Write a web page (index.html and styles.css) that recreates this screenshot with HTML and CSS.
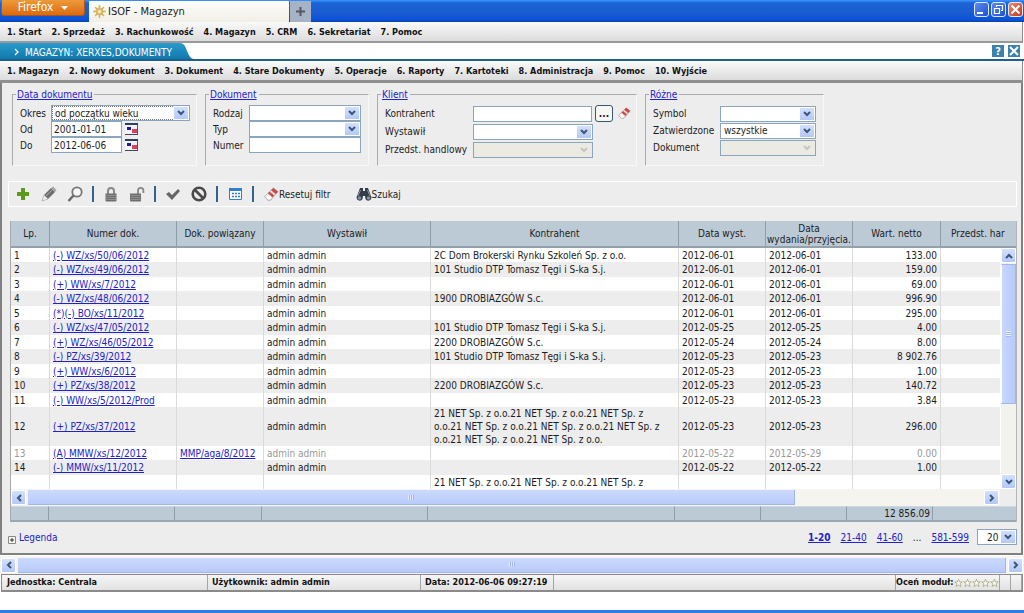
FILE: index.html
```html
<!DOCTYPE html>
<html lang="pl">
<head>
<meta charset="utf-8">
<meta name="viewport" content="width=device-width, initial-scale=1">
<title>ISOF - Magazyn</title>
<link rel="stylesheet" href="styles.css">
</head>
<body>
<svg class="defs" aria-hidden="true">
  <symbol id="down" viewBox="0 0 8 6"><path d="M1 1l3 3 3-3" fill="none" stroke="currentColor" stroke-width="2"/></symbol>
  <symbol id="up" viewBox="0 0 8 6"><path d="M1 5l3-3 3 3" fill="none" stroke="currentColor" stroke-width="2"/></symbol>
  <symbol id="left" viewBox="0 0 6 8"><path d="M5 1L2 4l3 3" fill="none" stroke="currentColor" stroke-width="2"/></symbol>
  <symbol id="right" viewBox="0 0 6 8"><path d="M1 1l3 3-3 3" fill="none" stroke="currentColor" stroke-width="2"/></symbol>
  <symbol id="chevron" viewBox="0 0 6 8"><path d="M1 1l3 3-3 3" fill="none" stroke="currentColor" stroke-width="1.300"/></symbol>
  <symbol id="calendar" viewBox="0 0 13 12"><path d="M0 0h13v12H0z" fill="#f3f3fa"/><path d="M0 0h13v2H0z" fill="#333a66"/><path d="M0 11h13v1H0z" fill="#445"/><path d="M12 2h1v9h-1z" fill="#556"/><path d="M2 4h4v3H2z" fill="#1c1c9c"/><path d="M7 6h5v4H7z" fill="#d9425a"/></symbol>
  <symbol id="eraser" viewBox="0 0 16 16"><path d="M1 10L10 1l5 4-8 9H4z" fill="#fbfbfb" stroke="#999" stroke-width=".8"/><path d="M4 7l6-6 5 4-6 6z" fill="#c94a42"/><path d="M6 5l5 4 1.500-1.500-5-4z" fill="#f5dcd9"/><path d="M1 10l3-3 5 4-2 3H4z" fill="#fff" stroke="#a5a5a5" stroke-width=".8"/></symbol>
  <symbol id="lock" viewBox="0 0 14 16"><path d="M4 8V5a3 3 0 016 0v3" fill="none" stroke="#888" stroke-width="2"/><path d="M1.500 7.500h11v7a1 1 0 01-1 1h-9a1 1 0 01-1-1z" fill="#6f6f6f"/><path d="M2 9.500h10M2 11.500h10M2 13.500h10" stroke="#8f8f8f"/></symbol>
  <symbol id="star" viewBox="0 0 10 10"><path d="M5 .8l1.200 3h3L6.800 5.700l.9 3.300L5 7.200 2.300 9l.9-3.300L.8 3.800h3z" fill="#fbfbf4" stroke="#aaa684" stroke-width=".9"/></symbol>
</svg>

<header class="titlebar">
  <button class="firefox" type="button">Firefox <svg width="7" height="4" viewBox="0 0 7 4"><path d="M0 0h7L3.500 4z" fill="#fff"/></svg></button>
  <div class="tab"><svg width="13" height="13" viewBox="0 0 13 13"><g stroke="#d9b15c" stroke-width="1.500"><path d="M6.500 0v13M0 6.500h13M2 2l9 9M11 2l-9 9"/></g><circle cx="6.500" cy="6.500" r="3.600" fill="none" stroke="#d9b15c"/><circle cx="6.500" cy="6.500" r="1.500" fill="#fff3cf"/></svg><span>ISOF - Magazyn</span></div>
  <button class="newtab" type="button" aria-label="Nowa karta"><svg width="9" height="9" viewBox="0 0 9 9"><path d="M3.500 0h2v3.500H9v2H5.500V9h-2V5.500H0v-2h3.500z" fill="#505a66"/></svg></button>
  <div class="winbtns">
    <button type="button" aria-label="Minimalizuj"><svg width="11" height="11" viewBox="0 0 11 11"><path d="M1 8h6v2H1z" fill="#fff"/></svg></button>
    <button type="button" aria-label="Przywróć"><svg width="11" height="11" viewBox="0 0 11 11"><path d="M3.500 3V1.500h6v5H8M1.500 4.500h5v5h-5z" fill="none" stroke="#fff" stroke-width="1.200"/></svg></button>
    <button class="close" type="button" aria-label="Zamknij"><svg width="11" height="11" viewBox="0 0 11 11"><path d="M1.500 1.500l8 8M9.500 1.500l-8 8" stroke="#fff" stroke-width="2"/></svg></button>
  </div>
</header>

<nav class="menu" aria-label="Główne">
  <a href="#">1. Start</a><a href="#">2. Sprzedaż</a><a href="#">3. Rachunkowość</a><a href="#">4. Magazyn</a><a href="#">5. CRM</a><a href="#">6. Sekretariat</a><a href="#">7. Pomoc</a>
</nav>

<div class="crumb">
  <div class="crumb-tab"><svg width="6" height="8"><use href="#chevron"/></svg><span>MAGAZYN: XERXES,DOKUMENTY</span></div>
  <svg class="crumb-edge" width="14" height="16" viewBox="0 0 14 16"><defs><linearGradient id="edge" x2="0" y2="1"><stop stop-color="#2a9bcd"/><stop offset="1" stop-color="#0f78ad"/></linearGradient></defs><path d="M0 0c8 0 6 15 14 16H0z" fill="url(#edge)"/></svg>
  <div class="crumb-tools">
    <button type="button">?</button>
    <button type="button" aria-label="Zamknij moduł"><svg width="10" height="10" viewBox="0 0 10 10"><path d="M1 1l8 8M9 1L1 9" stroke="#fff" stroke-width="2"/></svg></button>
  </div>
</div>

<nav class="menu menu-sub" aria-label="Magazyn">
  <a href="#">1. Magazyn</a><a href="#">2. Nowy dokument</a><a href="#">3. Dokument</a><a href="#">4. Stare Dokumenty</a><a href="#">5. Operacje</a><a href="#">6. Raporty</a><a href="#">7. Kartoteki</a><a href="#">8. Administracja</a><a href="#">9. Pomoc</a><a href="#">10. Wyjście</a>
</nav>

<main class="panel">
  <form class="filters">
    <fieldset class="f-date">
      <legend><a href="#">Data dokumentu</a></legend>
      <div class="fields">
        <label for="okres">Okres</label><span class="combo dotted"><select id="okres"><option>od początku wieku</option></select><svg><use href="#down"/></svg></span>
        <label for="od">Od</label><span class="with-icon"><input id="od" value="2001-01-01"><svg width="13" height="12"><use href="#calendar"/></svg></span>
        <label for="do">Do</label><span class="with-icon"><input id="do" value="2012-06-06"><svg width="13" height="12"><use href="#calendar"/></svg></span>
      </div>
    </fieldset>
    <fieldset class="f-doc">
      <legend><a href="#">Dokument</a></legend>
      <div class="fields">
        <label for="rodzaj">Rodzaj</label><span class="combo"><select id="rodzaj"><option></option></select><svg><use href="#down"/></svg></span>
        <label for="typ">Typ</label><span class="combo"><select id="typ"><option></option></select><svg><use href="#down"/></svg></span>
        <label for="numer">Numer</label><input id="numer">
      </div>
    </fieldset>
    <fieldset class="f-client">
      <legend><a href="#">Klient</a></legend>
      <div class="fields">
        <label for="kontrahent">Kontrahent</label><span class="with-icon"><input id="kontrahent"><button class="dots" type="button">...</button><svg width="13" height="13"><use href="#eraser"/></svg></span>
        <label for="wystawil">Wystawił</label><span class="combo"><select id="wystawil"><option></option></select><svg><use href="#down"/></svg></span>
        <label for="przedst">Przedst. handlowy</label><span class="combo off"><select id="przedst" disabled><option></option></select><svg><use href="#down"/></svg></span>
      </div>
    </fieldset>
    <fieldset class="f-misc">
      <legend><a href="#">Różne</a></legend>
      <div class="fields">
        <label for="symbol">Symbol</label><span class="combo"><select id="symbol"><option></option></select><svg><use href="#down"/></svg></span>
        <label for="zatw">Zatwierdzone</label><span class="combo"><select id="zatw"><option>wszystkie</option></select><svg><use href="#down"/></svg></span>
        <label for="dokument">Dokument</label><span class="combo off"><select id="dokument" disabled><option></option></select><svg><use href="#down"/></svg></span>
      </div>
    </fieldset>
  </form>

  <div class="toolbar">
    <button type="button" aria-label="Dodaj"><svg width="14" height="14" viewBox="0 0 14 14"><path d="M5 1h4v4h4v4H9v4H5V9H1V5h4z" fill="#5a9a1f"/></svg></button>
    <button type="button" aria-label="Edytuj"><svg width="16" height="16" viewBox="0 0 16 16"><path d="M3 9l7-7 4 4-7 7z" fill="#6f6f6f"/><path d="M10 2l2-1.500L15.500 4 14 6z" fill="#a5a5a5"/><path d="M3 9l4 4-6 2z" fill="#eee" stroke="#999" stroke-width=".6"/><path d="M5 10l6-6" stroke="#a9a9a9"/></svg></button>
    <button type="button" aria-label="Podgląd"><svg width="16" height="16" viewBox="0 0 16 16"><circle cx="10" cy="6" r="4.700" fill="#f6f6f6" stroke="#777" stroke-width="1.800"/><path d="M6.500 9.500L1.500 15" stroke="#6a6a6a" stroke-width="2.500"/></svg></button>
    <i class="sep"></i>
    <button type="button" aria-label="Zablokuj"><svg width="14" height="16"><use href="#lock"/></svg></button>
    <button type="button" aria-label="Odblokuj"><svg width="16" height="16" viewBox="0 0 16 16"><path d="M9 8V4.500a2.700 2.700 0 015.400 0V7" fill="none" stroke="#888" stroke-width="1.800"/><path d="M1 7.500h11v7a1 1 0 01-1 1H2a1 1 0 01-1-1z" fill="#6f6f6f"/><path d="M1.500 9.500h10M1.500 11.500h10M1.500 13.500h10" stroke="#8f8f8f"/></svg></button>
    <i class="sep"></i>
    <button type="button" aria-label="Zatwierdź"><svg width="16" height="14" viewBox="0 0 16 14"><path d="M1 7l3-2 3 3 6-6 2 2-8 9z" fill="#666"/></svg></button>
    <button type="button" aria-label="Anuluj"><svg width="16" height="16" viewBox="0 0 16 16"><circle cx="8" cy="8" r="6.300" fill="none" stroke="#4a4a4a" stroke-width="2.600"/><path d="M4 4l8 8" stroke="#4a4a4a" stroke-width="2.600"/></svg></button>
    <i class="sep"></i>
    <button type="button" aria-label="Kolumny"><svg width="13" height="12" viewBox="0 0 13 12"><path d="M.5 .5h12v11H.5z" fill="#fff" stroke="#2f7fd0"/><path d="M0 0h13v3H0z" fill="#2f7fd0"/><path d="M3 5.500h2m1 0h2m1 0h2M3 8.500h2m1 0h2m1 0h2" stroke="#2f7fd0" stroke-width="1.500"/></svg></button>
    <i class="sep"></i>
    <button class="text" type="button"><svg width="15" height="15"><use href="#eraser"/></svg>Resetuj filtr</button>
    <button class="text find" type="button"><svg width="16" height="15" viewBox="0 0 16 15"><path d="M4 1h3v3h2V1h3l3.500 9.500a3.200 3.200 0 01-6 1.500L9 9H7l-.5 3a3.200 3.200 0 01-6-1.500z" fill="#343e49"/><path d="M4.500 3L2 9M11.500 3L14 9" stroke="#8a97a5"/><circle cx="3.500" cy="11" r="1.800" fill="#7e93ab"/><circle cx="12.500" cy="11" r="1.800" fill="#7e93ab"/></svg>Szukaj</button>
  </div>

  <section class="grid">
    <table class="cols head">
      <colgroup><col class="c-lp"><col class="c-num"><col class="c-rel"><col class="c-by"><col><col class="c-d"><col class="c-d"><col class="c-net"><col class="c-last"></colgroup>
      <thead><tr><th>Lp.</th><th>Numer dok.</th><th>Dok. powiązany</th><th>Wystawił</th><th>Kontrahent</th><th>Data wyst.</th><th>Data wydania/przyjęcia.</th><th>Wart. netto</th><th class="cut">Przedst. har</th></tr></thead>
    </table>
    <div class="body">
      <table class="cols rows">
        <colgroup><col class="c-lp"><col class="c-num"><col class="c-rel"><col class="c-by"><col><col class="c-d"><col class="c-d"><col class="c-net"><col class="c-end"></colgroup>
        <tbody>
          <tr><td>1</td><td><a href="#">(-) WZ/xs/50/06/2012</a></td><td></td><td>admin admin</td><td>2C Dom Brokerski Rynku Szkoleń Sp. z o.o.</td><td>2012-06-01</td><td>2012-06-01</td><td>133.00</td><td></td></tr>
          <tr><td>2</td><td><a href="#">(-) WZ/xs/49/06/2012</a></td><td></td><td>admin admin</td><td>101 Studio DTP Tomasz Tęgi i S-ka S.j.</td><td>2012-06-01</td><td>2012-06-01</td><td>159.00</td><td></td></tr>
          <tr><td>3</td><td><a href="#">(+) WW/xs/7/2012</a></td><td></td><td>admin admin</td><td></td><td>2012-06-01</td><td>2012-06-01</td><td>69.00</td><td></td></tr>
          <tr><td>4</td><td><a href="#">(-) WZ/xs/48/06/2012</a></td><td></td><td>admin admin</td><td>1900 DROBIAZGÓW S.c.</td><td>2012-06-01</td><td>2012-06-01</td><td>996.90</td><td></td></tr>
          <tr><td>5</td><td><a href="#">(*)(-) BO/xs/11/2012</a></td><td></td><td>admin admin</td><td></td><td>2012-06-01</td><td>2012-06-01</td><td>295.00</td><td></td></tr>
          <tr><td>6</td><td><a href="#">(-) WZ/xs/47/05/2012</a></td><td></td><td>admin admin</td><td>101 Studio DTP Tomasz Tęgi i S-ka S.j.</td><td>2012-05-25</td><td>2012-05-25</td><td>4.00</td><td></td></tr>
          <tr><td>7</td><td><a href="#">(+) WZ/xs/46/05/2012</a></td><td></td><td>admin admin</td><td>2200 DROBIAZGÓW S.c.</td><td>2012-05-24</td><td>2012-05-24</td><td>8.00</td><td></td></tr>
          <tr><td>8</td><td><a href="#">(-) PZ/xs/39/2012</a></td><td></td><td>admin admin</td><td>101 Studio DTP Tomasz Tęgi i S-ka S.j.</td><td>2012-05-23</td><td>2012-05-23</td><td>8 902.76</td><td></td></tr>
          <tr><td>9</td><td><a href="#">(+) WW/xs/6/2012</a></td><td></td><td>admin admin</td><td></td><td>2012-05-23</td><td>2012-05-23</td><td>1.00</td><td></td></tr>
          <tr><td>10</td><td><a href="#">(+) PZ/xs/38/2012</a></td><td></td><td>admin admin</td><td>2200 DROBIAZGÓW S.c.</td><td>2012-05-23</td><td>2012-05-23</td><td>140.72</td><td></td></tr>
          <tr><td>11</td><td><a href="#">(-) WW/xs/5/2012/Prod</a></td><td></td><td>admin admin</td><td></td><td>2012-05-23</td><td>2012-05-23</td><td>3.84</td><td></td></tr>
          <tr><td>12</td><td><a href="#">(+) PZ/xs/37/2012</a></td><td></td><td>admin admin</td><td>21 NET Sp. z o.o.21 NET Sp. z o.o.21 NET Sp. z o.o.21 NET Sp. z o.o.21 NET Sp. z o.o.21 NET Sp. z o.o.21 NET Sp. z o.o.21 NET Sp. z o.o.</td><td>2012-05-23</td><td>2012-05-23</td><td>296.00</td><td></td></tr>
          <tr class="void"><td>13</td><td><a href="#">(A) MMW/xs/12/2012</a></td><td><a href="#">MMP/aga/8/2012</a></td><td>admin admin</td><td></td><td>2012-05-22</td><td>2012-05-29</td><td>0.00</td><td></td></tr>
          <tr><td>14</td><td><a href="#">(-) MMW/xs/11/2012</a></td><td></td><td>admin admin</td><td></td><td>2012-05-22</td><td>2012-05-22</td><td>1.00</td><td></td></tr>
          <tr><td></td><td></td><td></td><td></td><td>21 NET Sp. z o.o.21 NET Sp. z o.o.21 NET Sp. z</td><td></td><td></td><td></td><td></td></tr>
        </tbody>
      </table>
      <div class="vbar"><button type="button" aria-label="W górę"><svg width="8" height="6"><use href="#up"/></svg></button><div class="vthumb"></div><div class="vrest"></div><button type="button" aria-label="W dół"><svg width="8" height="6"><use href="#down"/></svg></button></div>
    </div>
    <div class="hbar inner"><button type="button" aria-label="W lewo"><svg width="6" height="8"><use href="#left"/></svg></button><div class="hthumb"></div><div class="hrest"></div><button type="button" aria-label="W prawo"><svg width="6" height="8"><use href="#right"/></svg></button></div>
    <table class="cols foot">
      <colgroup><col class="t-lp"><col class="t-num"><col class="t-rel"><col class="t-by"><col><col class="t-d"><col class="t-d"><col class="t-d"><col class="t-last"></colgroup>
      <tbody><tr><td></td><td></td><td></td><td></td><td></td><td></td><td></td><td>12 856.09</td><td></td></tr></tbody>
    </table>
  </section>

  <div class="under">
    <a class="legend" href="#"><svg width="8" height="8" viewBox="0 0 8 8"><path d="M.5 .5h7v7h-7z" fill="#f6f6f0" stroke="#888"/><path d="M2 4h4M4 2v4" stroke="#333"/></svg>Legenda</a>
    <nav class="pages" aria-label="Strony"><a class="on" href="#">1-20</a><a href="#">21-40</a><a href="#">41-60</a><span>...</span><a href="#">581-599</a></nav>
    <span class="combo size"><select aria-label="Liczba wierszy"><option>20</option></select><svg><use href="#down"/></svg></span>
  </div>
</main>

<div class="hbar outer"><button type="button" aria-label="W lewo"><svg width="6" height="8"><use href="#left"/></svg></button><div class="hthumb"></div><button type="button" aria-label="W prawo"><svg width="6" height="8"><use href="#right"/></svg></button></div>

<footer class="status">
  <span class="s-unit">Jednostka: Centrala</span><span class="s-user">Użytkownik: admin admin</span><span class="s-date">Data: 2012-06-06 09:27:19</span><span class="s-gap"></span>
  <span class="s-rate">Oceń moduł:<svg width="9" height="10"><use href="#star"/></svg><svg width="9" height="10"><use href="#star"/></svg><svg width="9" height="10"><use href="#star"/></svg><svg width="9" height="10"><use href="#star"/></svg><svg width="9" height="10"><use href="#star"/></svg></span><span class="s-box"></span><span class="s-box"></span>
</footer>
<div class="taskbar"></div>
</body>
</html>
```

FILE: styles.css
```css
* { box-sizing: border-box; }

body {
  margin: 0;
  min-height: 100vh;
  display: flex;
  flex-direction: column;
  background: #fff;
  color: #1c1c1c;
  font: 10px/13px "DejaVu Sans Condensed", "DejaVu Sans", sans-serif;
}
button, input, select { font: inherit; color: inherit; margin: 0; padding: 0; border: 0; background: none; border-radius: 0; }
button { display: flex; align-items: center; justify-content: center; }
a { color: #2222cc; }
svg { flex: none; display: block; }
.defs { position: absolute; width: 0; height: 0; }

/* browser window */
.titlebar {
  height: 22px;
  display: flex;
  background: linear-gradient(#3d96ff, #1a63d6 3px, #1b5cd0 12px, #0a52dc 20px, #0a3f9c);
}
.firefox {
  width: 84px;
  height: 16px;
  margin-left: 1px;
  gap: 8px;
  color: #fff;
  font-size: 12px;
  background: linear-gradient(#ec9a3a, #dc6a10);
  border: 1px solid #a8581c;
  border-top: 0;
  border-radius: 0 0 3px 3px;
}
.tab {
  width: 200px;
  margin: 1px 0 0 4px;
  padding-left: 4px;
  display: flex;
  align-items: center;
  gap: 2px;
  background: linear-gradient(#fdfdfb, #f1efe6);
  font-size: 11px;
}
.newtab { width: 21px; margin: 1px 0 0 1px; background: #a5b3c4; }
.winbtns { display: flex; gap: 2px; margin: 2px 1px 0 auto; }
.winbtns button { width: 15px; height: 15px; border: 1px solid #dfe9fb; border-radius: 3px; background: linear-gradient(135deg, #5b8cf0, #1f4fcf); }
.winbtns .close { background: linear-gradient(135deg, #ee8a68, #c8341a); }

.menu {
  height: 21px;
  display: flex;
  align-items: center;
  gap: 10px;
  padding: 2px 7px 0;
  margin-right: 1px;
  background: linear-gradient(#fafafa, #dcdcdc);
  border-bottom: 2px solid #9a9a9a;
  border-right: 1px solid #8c8c8c;
}
.menu a { color: #111; text-decoration: none; font-weight: bold; font-size: 9px; white-space: nowrap; }
.menu-sub { border-bottom: 3px solid #8f8f8f; height: 22px; }

.crumb { height: 18px; display: flex; align-items: flex-end; border-bottom: 2px solid #22608c; }
.crumb-tab {
  height: 16px;
  width: 180px;
  padding: 2px 0 0 14px;
  display: flex;
  align-items: center;
  gap: 5px;
  white-space: nowrap;
  color: #fff;
  background: linear-gradient(#2a9bcd, #0f78ad);
}
.crumb-tools { margin: 0 4px 2px auto; display: flex; gap: 4px; }
.crumb-tools button { width: 12px; height: 12px; background: #3c82a9; color: #fff; font-size: 11px; font-weight: bold; }

/* filters */
.panel {
  margin-right: 1px;
  background: #ededed;
  border: solid #808080;
  border-width: 0 2px 2px 2px;
  padding: 5px 4px 8px 6px;
}
.filters { display: flex; gap: 8px; padding-left: 4px; }
fieldset {
  margin: 0;
  min-width: 0;
  height: 78px;
  padding: 4px 7px 0;
  border: 1px solid #f8f8f8;
  border-top-color: #ababab;
  border-left-color: #ababab;
}
legend { padding: 0 2px 0 1px; margin-left: -4px; }
.f-date { width: 185px; }
.f-doc { width: 164px; }
.f-client { width: 260px; }
.f-misc { width: 179px; }
.fields { display: grid; align-items: center; grid-auto-rows: 16px; }
.f-date .fields { grid-template-columns: 31px 139px; }
.f-doc .fields { grid-template-columns: 36px 112px; }
.f-client .fields { grid-template-columns: 88px 120px; grid-auto-rows: 17px; row-gap: 1px; }
.f-misc .fields { grid-template-columns: 67px 96px; grid-auto-rows: 17px; }
label { white-space: nowrap; }
input {
  width: 100%;
  height: 16px;
  padding: 0 2px;
  background: #fff;
  border: 1px solid #8aa6bd;
}
.with-icon { display: flex; align-items: center; gap: 3px; }
.with-icon input { flex: none; width: 71px; }
.f-client .with-icon input { width: 119px; }
.f-client .with-icon svg { margin-left: 2px; }
.dots { flex: none; width: 18px; height: 17px; border: 1px solid #39566f; border-radius: 3px; background: #f6f6f2; font-weight: bold; }
.combo { display: grid; height: 16px; background: #fff; border: 1px solid #8aa6bd; }
.combo > * { grid-area: 1 / 1; }
.combo select { appearance: none; width: 100%; height: 14px; padding: 0 18px 0 3px; }
.combo.dotted select { outline: 1px dotted #777; outline-offset: -1px; }
.combo svg {
  justify-self: end;
  width: 16px;
  height: 14px;
  padding: 3px;
  color: #3c567e;
  pointer-events: none;
  background: linear-gradient(#d3e0fd, #b4c8f6);
  border: 1px solid #fff;
}
.combo.off, .combo.off svg { background: #ebebe3; }
.combo.off svg { color: #c6c6ba; border-color: #ebebe3; }

/* toolbar */
.toolbar {
  height: 26px;
  margin-top: 15px;
  padding-left: 1px;
  display: flex;
  align-items: center;
  border: 1px solid #fff;
}
.toolbar button { width: 26px; height: 20px; }
.toolbar .sep { width: 2px; height: 16px; margin: 0 4px; background: #33628f; }
.toolbar .text { width: auto; margin-left: 6px; }
.toolbar .find { margin-left: 25px; }

/* document grid */
.grid { margin: 14px 0 0 2px; border-left: 1px solid #a9a9a9; border-right: 1px solid #b5b5b5; }
.cols { width: 100%; table-layout: fixed; border-collapse: separate; border-spacing: 0; }
.c-lp { width: 39px; }
.c-num { width: 127px; }
.c-rel { width: 87px; }
.c-by { width: 167px; }
.c-d { width: 87px; }
.c-net { width: 88px; }
.c-last { width: 75px; }
.c-end { width: 59px; }
.head th {
  height: 27px;
  padding: 0;
  font-weight: normal;
  line-height: 11px;
  background: #bccad6;
  border-right: 1px solid #8f9dab;
  border-bottom: 2px solid #93a1ad;
}
.head .cut { padding-left: 10px; text-align: left; border-right: 0; }
.body { display: flex; }
.rows { flex: 1; width: 0; align-self: flex-start; }
.rows tr { height: 14px; background: #fff; }
.rows tr:nth-child(even) { height: 15px; background: #ededed; }
.rows td { padding: 0 3px; border-right: 1px solid #dadada; line-height: 13px; }
.rows td:nth-child(5) { padding-right: 8px; }
.rows td:nth-child(8) { text-align: right; }
.rows td:last-child { border-right: 0; }
.rows .void td { color: #999; }

.vbar { flex: none; width: 16px; display: flex; flex-direction: column; background: #f3f3ee; border-left: 1px solid #fff; }
.vbar button, .hbar button { flex: none; width: 15px; height: 15px; color: #3c567e; background: linear-gradient(#d3e0fd, #b4c8f6); border: 1px solid #fff; border-radius: 2px; }
.vthumb {
  flex: 140;
  margin: 1px 0;
  background:
    repeating-linear-gradient(#eef3ff 0 1px, #a3b9ee 1px 2px) center / 5px 6px no-repeat,
    linear-gradient(90deg, #c8d7fd, #b7cafa);
  border: 1px solid #9fb6ee;
  border-left-color: #fff;
}
.vrest { flex: 70; }
.hbar { display: flex; align-items: center; height: 17px; background: #f5f4ef; }
.hthumb {
  height: 15px;
  flex: 769;
  margin: 0 2px;
  background:
    repeating-linear-gradient(90deg, #e2eaff 0 1px, #a3b9ee 1px 2px) center / 6px 5px no-repeat,
    linear-gradient(#cbd9fe, #b9cbfa);
  border: solid #9fb6ee;
  border-width: 0 1px 1px 0;
}
.hrest { flex: 188; }
.inner { margin-right: 16px; padding-right: 1px; }
.foot td { height: 16px; padding: 0 2px; line-height: 13px; text-align: right; background: #bccad6; border-right: 1px solid #8f9dab; border-bottom: 2px solid #9aa8b4; border-top: 1px solid #ccd8e4; }
.foot td:last-child { border-right: 0; }
.t-lp { width: 38px; }
.t-num { width: 126px; }
.t-rel { width: 87px; }
.t-by { width: 166px; }
.t-d { width: 86px; }
.t-last { width: 83px; }

.under { display: flex; align-items: center; margin-top: 7px; }
.legend { display: flex; align-items: flex-end; gap: 3px; text-decoration: none; }
.pages { margin-left: auto; display: flex; gap: 10px; }
.pages .on { font-weight: bold; }
.size { width: 40px; margin-left: 8px; }
.size select { padding-left: 9px; padding-right: 0; }

.outer { height: 18px; padding: 0 1px; margin-top: 1px; }
.outer .hthumb { flex: 1; }

/* status bar */
.status {
  height: 18px;
  display: flex;
  align-items: center;
  margin: 0 1px;
  padding-left: 1px;
  font-size: 9px;
  font-weight: bold;
  color: #111;
  background: linear-gradient(#f6f6f6, #e2e2e2);
  border: solid #8a8a8a;
  border-width: 1px 1px 2px;
}
.status span { height: 100%; display: flex; align-items: center; padding-left: 4px; border-right: 1px solid #a5a5a5; white-space: nowrap; }
.s-unit { width: 205px; }
.s-user { width: 213px; }
.s-date { width: 133px; }
.s-gap { flex: 1; }
.status .s-rate { width: 104px; padding-left: 0; }
.s-box { width: 11px; }
.taskbar { height: 3px; margin-top: auto; background: #2f7de0; }
```
